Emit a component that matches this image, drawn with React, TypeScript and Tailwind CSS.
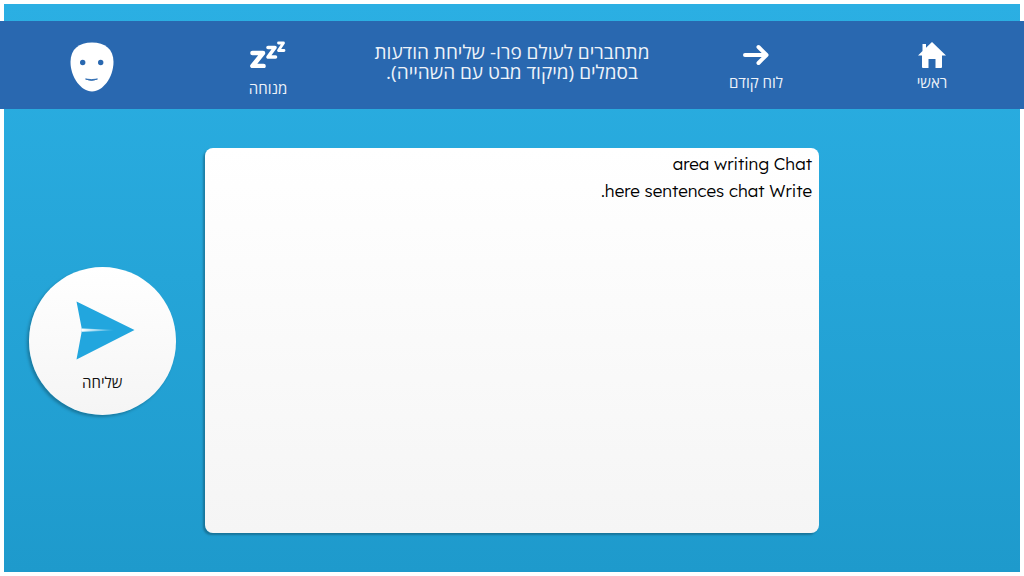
import React from 'react';

const hebrew = { fontFamily: '"Open Sans", "Noto Sans", "Liberation Sans", sans-serif' };

const HomeIcon = () => (
  <svg width="28" height="26" viewBox="0 0 28 26" fill="#fff">
    <path d="M14 0 L28 13.5 L24 13.5 L24 25 Q24 26 23 26 L17.5 26 L17.5 17 L10.5 17 L10.5 26 L5 26 Q4 26 4 25 L4 13.5 L0 13.5 L4.5 9 L4.5 2 L8 2 L8 5.8 Z" />
  </svg>
);

const ArrowIcon = () => (
  <svg width="26" height="26" viewBox="0 0 26 26" fill="none" stroke="#fff" strokeWidth="4" strokeLinecap="round" strokeLinejoin="round">
    <path d="M2 13 H23 M15.5 5 L23.5 13 L15.5 21" />
  </svg>
);

const SleepIcon = () => (
  <svg width="36" height="27" viewBox="0 0 36 27" fill="none" stroke="#fff" strokeLinecap="round" strokeLinejoin="round">
    <path d="M2.5 12 H13 L2.5 25 H13.5" strokeWidth="4.6" />
    <path d="M18 6.5 H25 L18 16 H25.5" strokeWidth="3.6" />
    <path d="M28.5 2 H33.5 L28.5 9.5 H34" strokeWidth="2.8" />
  </svg>
);

const FaceIcon = () => (
  <svg width="44" height="50" viewBox="0 0 44 50">
    <path d="M22 0.5 C35 0.5 43.5 7 43.5 20 C43.5 35 33 49.5 22 49.5 C11 49.5 0.5 35 0.5 20 C0.5 7 9 0.5 22 0.5 Z" fill="#fff" />
    <circle cx="12.7" cy="20.5" r="2.7" fill="#2968b0" />
    <circle cx="30.7" cy="20.5" r="2.7" fill="#2968b0" />
    <path d="M15.5 37 Q21.5 40 27.5 37 Q21.5 38.2 15.5 37 Z" fill="#2968b0" stroke="#2968b0" strokeWidth="0.8" />
  </svg>
);

const SendIcon = () => (
  <svg width="60" height="60" viewBox="0 0 60 60">
    <defs>
      <linearGradient id="fold" x1="0" x2="1" y1="0" y2="0">
        <stop offset="0" stopColor="#ffffff" />
        <stop offset="1" stopColor="#ffffff" stopOpacity="0" />
      </linearGradient>
    </defs>
    <path d="M0.5 0.5 L58.5 29 L0.5 58.5 L6 29 Z" fill="#22a6de" />
    <path d="M6 27.5 L38 28.8 L38 29.6 L6 30.8 Z" fill="url(#fold)" />
  </svg>
);

const App: React.FC = () => {
  return (
    <div className="h-[576px] w-[1024px] overflow-hidden bg-white p-1" style={hebrew}>
      <div className="flex h-[568px] flex-col bg-gradient-to-b from-[#2bafe3] to-[#1e9acc]">
        <header
          dir="rtl"
          className="-mx-1 mt-[17px] grid h-[88px] shrink-0 grid-cols-[184px_168px_1fr_168px_184px] items-center bg-[#2968b0] text-[#eef3f9]"
        >
          <div className="flex flex-col items-center self-start pt-[21px]">
            <HomeIcon />
            <span className="mt-[5px] text-[15px] leading-[18px]">ראשי</span>
          </div>
          <div className="flex flex-col items-center self-start pt-[21px]">
            <ArrowIcon />
            <span className="mt-[5px] text-[15px] leading-[18px]">לוח קודם</span>
          </div>
          <h1 className="pb-[7px] text-center text-[19px] font-normal leading-[20px]">
            מתחברים לעולם פרו- שליחת הודעות
            <br />
            בסמלים (מיקוד מבט עם השהייה).
          </h1>
          <div className="flex flex-col items-center self-start pt-[20px]">
            <SleepIcon />
            <span className="mt-[11px] text-[15px] leading-[18px]">מנוחה</span>
          </div>
          <div className="flex flex-col items-center self-start pt-[20.5px]">
            <FaceIcon />
          </div>
        </header>

        <main className="flex flex-1 items-center gap-[29px] pl-[24.5px]">
          <button
            dir="rtl"
            className="flex h-[148px] w-[147.5px] flex-col items-center rounded-full bg-gradient-to-b from-white to-[#f5f5f5] pt-[34px] shadow-[-2px_2px_3px_rgba(0,0,0,0.25)]"
          >
            <span dir="ltr" className="mr-[-7px] block h-[60px]">
              <SendIcon />
            </span>
            <span className="mt-[12px] text-[15px] leading-[18px] text-[#111]">שליחה</span>
          </button>

          <div className="h-[385px] w-[614px] rounded-lg bg-gradient-to-b from-white to-[#f5f5f5] pr-[7px] pt-[2px] text-right font-['Lexend','Lato',sans-serif] text-[17px] font-light leading-[27px] text-black shadow-[-2px_2px_2px_rgba(0,0,0,0.25)]">
            <p>area writing Chat</p>
            <p>.here sentences chat Write</p>
          </div>
        </main>
      </div>
    </div>
  );
};

export default App;
